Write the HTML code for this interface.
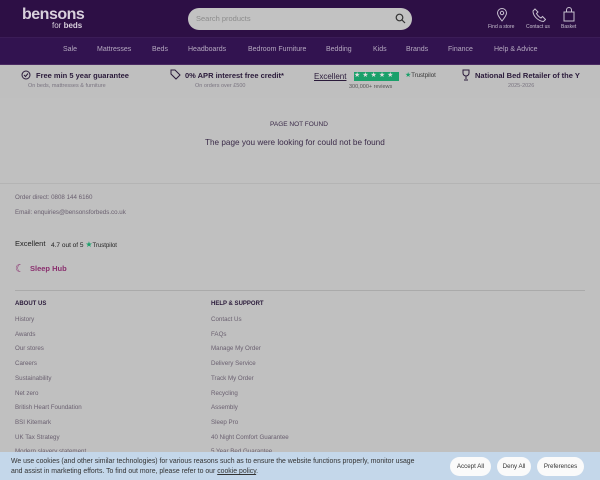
<!DOCTYPE html>
<html><head><meta charset="utf-8"><style>
*{margin:0;padding:0;box-sizing:border-box}
body{width:600px;height:480px;overflow:hidden;background:#c0c0c0;font-family:"Liberation Sans",sans-serif;position:relative;color:#3a2a48}
.a{position:absolute;white-space:nowrap}
#hdr{position:absolute;left:0;top:0;width:600px;height:37px;background:#2d0f45}
#nav{position:absolute;left:0;top:37px;width:600px;height:27px;background:#321350;border-top:1px solid #3b1c57}
#ben{position:absolute;left:0;top:64px;width:600px;height:34px;background:#bfbfbf;border-top:1px solid #4a2a62}
.nv{color:#b5a9c0;font-size:7px;top:46px}
.b1{font-size:7.5px;font-weight:bold;color:#2a1a3a;top:71px}
.b2{font-size:5.5px;color:#7a7480;top:83px}
.ic{color:#c8c0d0;font-size:5px;top:24px}
.f{font-size:6.2px;color:#6a6070}
.l{font-size:6.2px;color:#6a6070;left:15px}
.r{font-size:6.2px;color:#6a6070;left:211px}
#ck{position:absolute;left:0;top:452px;width:600px;height:28px;background:#c4d7ea}
.btn{position:absolute;top:457px;height:19px;border-radius:10px;background:#fafafa;font-size:6.2px;color:#333;text-align:center;line-height:19px}
</style></head><body>
<div id="hdr"></div>
<div class="a" style="left:22px;top:6px;font-size:16px;font-weight:bold;color:#d8d0dc;letter-spacing:-0.5px">bensons</div>
<div class="a" style="left:52px;top:21px;font-size:8px;color:#d8d0dc">for <b>beds</b></div>
<div class="a" style="left:188px;top:8px;width:224px;height:22px;border-radius:11px;background:#c2c2c2"></div>
<div class="a" style="left:196px;top:14px;font-size:7.5px;color:#8c8c8c">Search products</div>
<svg class="a" style="left:395px;top:13px" width="11" height="11" viewBox="0 0 11 11"><circle cx="4.5" cy="4.5" r="3.3" fill="none" stroke="#333" stroke-width="1.2"/><path d="M7 7l3 3" stroke="#333" stroke-width="1.2"/></svg>
<svg class="a" style="left:496px;top:8px" width="12" height="14" viewBox="0 0 12 14"><path d="M6 13C2 8 1.5 6.5 1.5 5a4.5 4.5 0 019 0c0 1.5-.5 3-4.5 8z" fill="none" stroke="#c8c0d0" stroke-width="1"/><circle cx="6" cy="5" r="1.7" fill="none" stroke="#c8c0d0"/></svg>
<svg class="a" style="left:532px;top:8px" width="14" height="14" viewBox="0 0 14 14"><path d="M3 1l3 3-1.5 1.5c1 2 2.5 3.5 4.5 4.5L10.5 8.5l3 3-2 2C6 13 1 8 1 3z" fill="none" stroke="#c8c0d0" stroke-width="1"/></svg>
<svg class="a" style="left:563px;top:7px" width="12" height="15" viewBox="0 0 12 15"><path d="M1 5h10v9H1z M3.5 5V3a2.5 2.5 0 015 0v2" fill="none" stroke="#c8c0d0" stroke-width="1"/></svg>
<div class="a ic" style="left:488px">Find a store</div>
<div class="a ic" style="left:526px">Contact us</div>
<div class="a ic" style="left:561px">Basket</div>
<div id="nav"></div>
<div class="a nv" style="left:63px">Sale</div>
<div class="a nv" style="left:97px">Mattresses</div>
<div class="a nv" style="left:152px">Beds</div>
<div class="a nv" style="left:188px">Headboards</div>
<div class="a nv" style="left:248px">Bedroom Furniture</div>
<div class="a nv" style="left:326px">Bedding</div>
<div class="a nv" style="left:373px">Kids</div>
<div class="a nv" style="left:406px">Brands</div>
<div class="a nv" style="left:448px">Finance</div>
<div class="a nv" style="left:494px">Help &amp; Advice</div>
<div id="ben"></div>
<svg class="a" style="left:21px;top:70px" width="10" height="10" viewBox="0 0 10 10"><circle cx="5" cy="5" r="4" fill="none" stroke="#2a1a3a"/><path d="M3 5l1.5 1.5L7 3.5" fill="none" stroke="#2a1a3a"/></svg>
<div class="a b1" style="left:36px">Free min 5 year guarantee</div>
<div class="a b2" style="left:28px">On beds, mattresses &amp; furniture</div>
<svg class="a" style="left:170px;top:69px" width="11" height="11" viewBox="0 0 11 11"><path d="M1 1h4l5 5-4 4-5-5z" fill="none" stroke="#2a1a3a"/></svg>
<div class="a b1" style="left:185px">0% APR interest free credit*</div>
<div class="a b2" style="left:195px">On orders over £500</div>
<div class="a" style="left:314px;top:72px;font-size:8px;color:#2a1a3a;text-decoration:underline">Excellent</div>
<div class="a" style="left:354px;top:72px;width:45px;height:9px;background:#1aa06a"></div>
<div class="a" style="left:354px;top:71px;font-size:7px;color:#ddd;letter-spacing:2px">★★★★★</div>
<div class="a" style="left:405px;top:71px;font-size:7px;color:#1aa06a">★<span style="color:#333;font-size:6px">Trustpilot</span></div>
<div class="a b2" style="left:349px;top:84px;color:#555">300,000+ reviews</div>
<svg class="a" style="left:461px;top:69px" width="10" height="12" viewBox="0 0 10 12"><path d="M2 1h6v3a3 3 0 01-6 0z M5 7v3 M3 11h4" fill="none" stroke="#2a1a3a"/></svg>
<div class="a b1" style="left:475px">National Bed Retailer of the Y</div>
<div class="a b2" style="left:508px">2025-2026</div>
<div class="a" style="left:270px;top:121px;font-size:6.5px;color:#3a2a48">PAGE NOT FOUND</div>
<div class="a" style="left:205px;top:138px;font-size:8.2px;color:#3a2a48">The page you were looking for could not be found</div>
<div class="a" style="left:0;top:183px;width:600px;height:1px;background:#b4b4b4"></div>
<div class="a f" style="left:15px;top:194px">Order direct: 0808 144 6160</div>
<div class="a f" style="left:15px;top:209px">Email: enquiries@bensonsforbeds.co.uk</div>
<div class="a" style="left:15px;top:239px;font-size:7.5px;color:#222">Excellent</div>
<div class="a" style="left:51px;top:240px;font-size:6.5px;color:#222">4.7 out of 5 <span style="color:#1aa06a;font-size:8px">★</span><span style="font-size:6px">Trustpilot</span></div>
<div class="a" style="left:15px;top:262px;font-size:11px;color:#8a2f6e">☾</div>
<div class="a" style="left:30px;top:264px;font-size:7.5px;font-weight:bold;color:#8a2f6e">Sleep Hub</div>
<div class="a" style="left:15px;top:290px;width:570px;height:1px;background:#aaa"></div>
<div class="a" style="left:15px;top:301px;font-size:6px;font-weight:bold;color:#2a1a3a">ABOUT US</div>
<div class="a" style="left:211px;top:301px;font-size:6px;font-weight:bold;color:#2a1a3a">HELP &amp; SUPPORT</div>
<div class="a l" style="top:316px">History</div><div class="a r" style="top:316px">Contact Us</div>
<div class="a l" style="top:331px">Awards</div><div class="a r" style="top:331px">FAQs</div>
<div class="a l" style="top:345px">Our stores</div><div class="a r" style="top:345px">Manage My Order</div>
<div class="a l" style="top:360px">Careers</div><div class="a r" style="top:360px">Delivery Service</div>
<div class="a l" style="top:375px">Sustainability</div><div class="a r" style="top:375px">Track My Order</div>
<div class="a l" style="top:390px">Net zero</div><div class="a r" style="top:390px">Recycling</div>
<div class="a l" style="top:404px">British Heart Foundation</div><div class="a r" style="top:404px">Assembly</div>
<div class="a l" style="top:419px">BSI Kitemark</div><div class="a r" style="top:419px">Sleep Pro</div>
<div class="a l" style="top:434px">UK Tax Strategy</div><div class="a r" style="top:434px">40 Night Comfort Guarantee</div>
<div class="a l" style="top:448px">Modern slavery statement</div><div class="a r" style="top:448px">5 Year Bed Guarantee</div>
<div id="ck"></div>
<div class="a" style="left:11px;top:457px;font-size:6.9px;line-height:10px;color:#333">We use cookies (and other similar technologies) for various reasons such as to ensure the website functions properly, monitor usage<br>and assist in marketing efforts. To find out more, please refer to our <u>cookie policy</u>.</div>
<div class="btn" style="left:450px;width:41px">Accept All</div>
<div class="btn" style="left:497px;width:34px">Deny All</div>
<div class="btn" style="left:537px;width:47px">Preferences</div>
</body></html>
